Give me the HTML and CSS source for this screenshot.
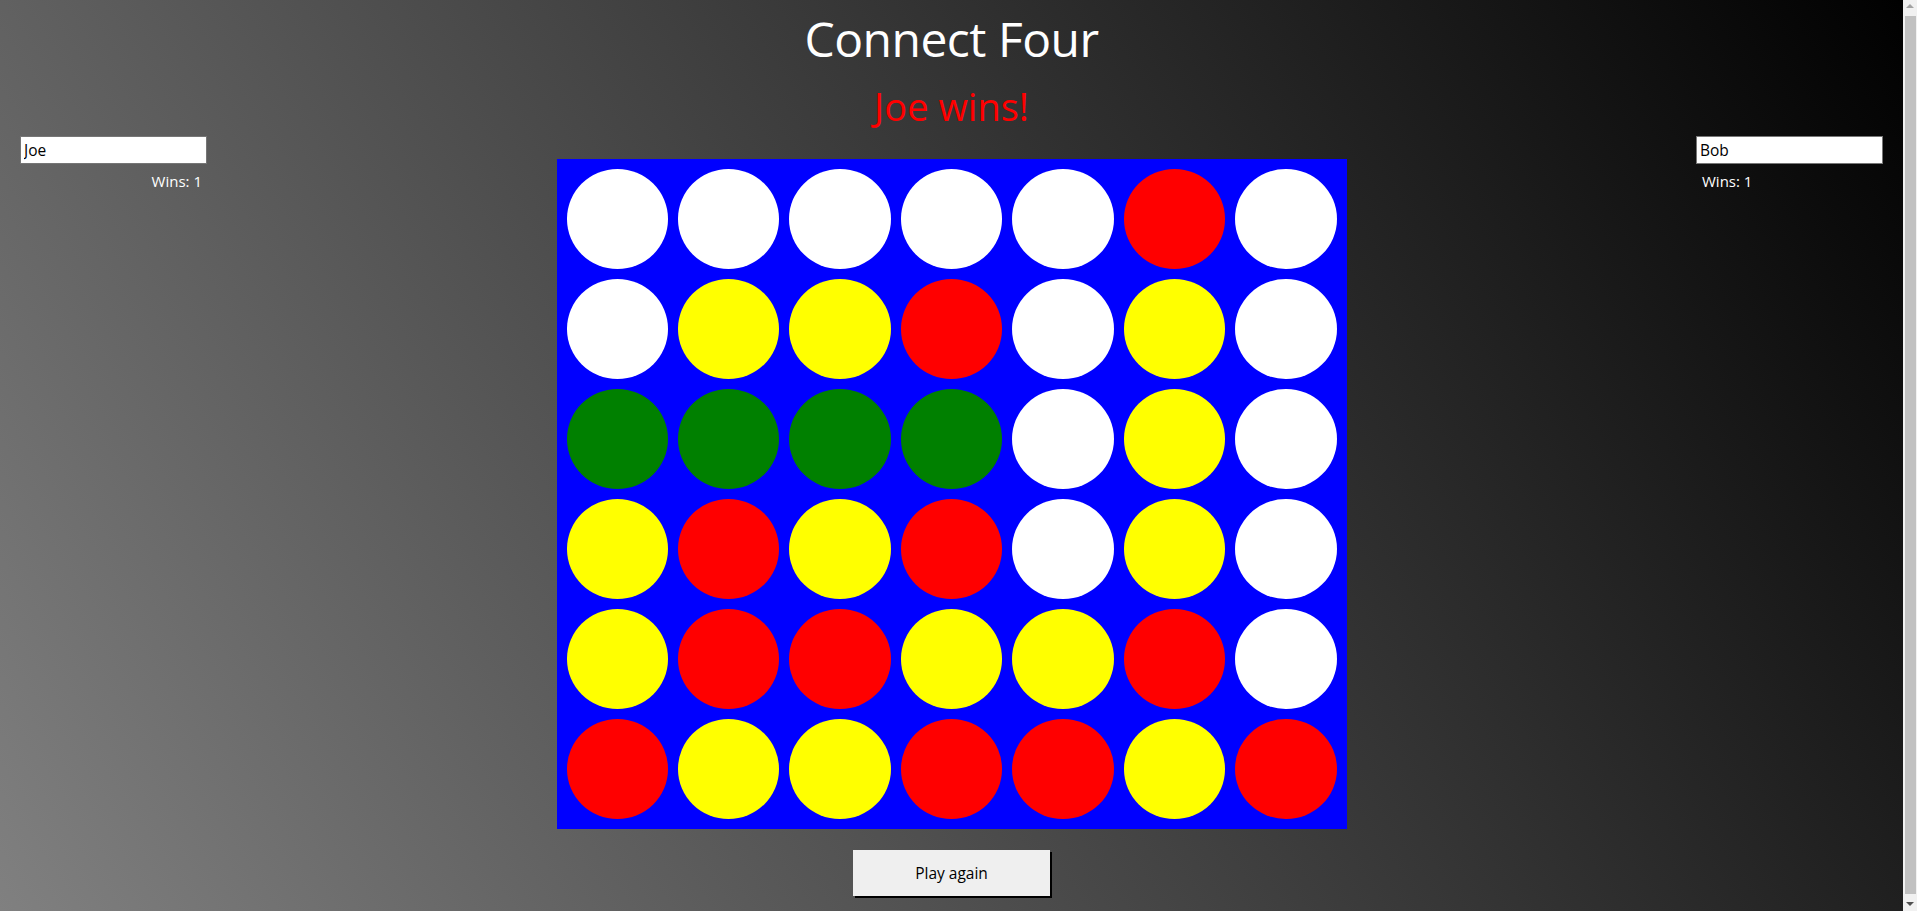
FILE: index.html
```html
<!DOCTYPE html>
<html lang="en">
<head>
<meta charset="utf-8">
<title>Connect Four</title>
<link rel="stylesheet" href="styles.css">
</head>
<body>
<div class="layout">
  <aside class="side side-left">
    <input class="name-input" type="text" value="Joe">
    <div class="wins wins-left">Wins: 1</div>
  </aside>
  <main class="center">
    <h1 class="title">Connect Four</h1>
    <div class="status">Joe wins!</div>
    <div class="board">
      <div class="cell"><span class="disc empty"></span></div>
      <div class="cell"><span class="disc empty"></span></div>
      <div class="cell"><span class="disc empty"></span></div>
      <div class="cell"><span class="disc empty"></span></div>
      <div class="cell"><span class="disc empty"></span></div>
      <div class="cell"><span class="disc red"></span></div>
      <div class="cell"><span class="disc empty"></span></div>

      <div class="cell"><span class="disc empty"></span></div>
      <div class="cell"><span class="disc yellow"></span></div>
      <div class="cell"><span class="disc yellow"></span></div>
      <div class="cell"><span class="disc red"></span></div>
      <div class="cell"><span class="disc empty"></span></div>
      <div class="cell"><span class="disc yellow"></span></div>
      <div class="cell"><span class="disc empty"></span></div>

      <div class="cell"><span class="disc green"></span></div>
      <div class="cell"><span class="disc green"></span></div>
      <div class="cell"><span class="disc green"></span></div>
      <div class="cell"><span class="disc green"></span></div>
      <div class="cell"><span class="disc empty"></span></div>
      <div class="cell"><span class="disc yellow"></span></div>
      <div class="cell"><span class="disc empty"></span></div>

      <div class="cell"><span class="disc yellow"></span></div>
      <div class="cell"><span class="disc red"></span></div>
      <div class="cell"><span class="disc yellow"></span></div>
      <div class="cell"><span class="disc red"></span></div>
      <div class="cell"><span class="disc empty"></span></div>
      <div class="cell"><span class="disc yellow"></span></div>
      <div class="cell"><span class="disc empty"></span></div>

      <div class="cell"><span class="disc yellow"></span></div>
      <div class="cell"><span class="disc red"></span></div>
      <div class="cell"><span class="disc red"></span></div>
      <div class="cell"><span class="disc yellow"></span></div>
      <div class="cell"><span class="disc yellow"></span></div>
      <div class="cell"><span class="disc red"></span></div>
      <div class="cell"><span class="disc empty"></span></div>

      <div class="cell"><span class="disc red"></span></div>
      <div class="cell"><span class="disc yellow"></span></div>
      <div class="cell"><span class="disc yellow"></span></div>
      <div class="cell"><span class="disc red"></span></div>
      <div class="cell"><span class="disc red"></span></div>
      <div class="cell"><span class="disc yellow"></span></div>
      <div class="cell"><span class="disc red"></span></div>
    </div>
    <button class="play-again" type="button">Play again</button>
  </main>
  <aside class="side side-right">
    <input class="name-input" type="text" value="Bob">
    <div class="wins wins-right">Wins: 1</div>
  </aside>
</div>
<div class="scrollbar" aria-hidden="true">
  <div class="sb-arrow sb-up"></div>
  <div class="sb-track"><div class="sb-thumb"></div></div>
  <div class="sb-arrow sb-down"></div>
</div>
</body>
</html>
```

FILE: styles.css
```css
html {
  height: 100%;
  background: linear-gradient(56deg, #808080 0%, #000000 100%);
}

body {
  margin: 0;
  height: 100%;
  overflow: hidden;
  font-family: "Open Sans", "Noto Sans", sans-serif;
  font-size: 15px;
  color: #ffffff;
}

.layout {
  display: flex;
  align-items: flex-start;
  width: calc(100% - 14px);
}

.side {
  width: 187px;
  padding-top: 136px;
  flex: none;
}

.side-left {
  padding-left: 20px;
}

.side-right {
  padding-right: 20px;
}

.name-input {
  display: block;
  box-sizing: border-box;
  width: 187px;
  height: 28px;
  margin: 0;
  padding: 0 3px;
  border: 1px solid #767676;
  border-radius: 0;
  background: #ffffff;
  color: #000000;
  font-family: "Open Sans", "Noto Sans", sans-serif;
  font-size: 15.5px;
  outline: none;
}

.wins {
  margin-top: 7px;
  line-height: 20px;
  color: #ffffff;
}

.wins-left {
  text-align: right;
  padding-right: 5px;
}

.wins-right {
  padding-left: 6px;
}

.center {
  flex: 1;
  display: flex;
  flex-direction: column;
  align-items: center;
}

.title {
  margin: 15px 0 0;
  font-size: 48px;
  line-height: 48px;
  font-weight: 400;
  letter-spacing: -0.5px;
  color: #ffffff;
}

.status {
  margin-top: 24px;
  font-size: 38px;
  line-height: 38px;
  color: #ff0000;
}

.board {
  margin-top: 34px;
  box-sizing: border-box;
  width: 790px;
  height: 670px;
  padding: 5px;
  background: #0000ff;
  display: grid;
  grid-template-columns: repeat(7, 1fr);
  grid-template-rows: repeat(6, 110px);
}

.cell {
  padding: 5px;
  display: flex;
}

.disc {
  flex: 1;
  border-radius: 50%;
}

.empty { background: #ffffff; }
.red { background: #ff0000; }
.yellow { background: #ffff00; }
.green { background: #008000; }

.play-again {
  margin-top: 21px;
  width: 197px;
  height: 46px;
  border: none;
  border-radius: 0;
  background: #efefef;
  box-shadow: 2px 2px 0 #000000;
  font-family: "Open Sans", "Noto Sans", sans-serif;
  font-size: 15.5px;
  color: #000000;
  padding: 0;
}

.scrollbar {
  position: fixed;
  top: 0;
  right: 0;
  width: 14px;
  height: 100%;
  background: #f1f1f1;
  display: flex;
  flex-direction: column;
}

.sb-arrow {
  height: 14px;
  flex: none;
  position: relative;
}

.sb-arrow::after {
  content: "";
  position: absolute;
  left: 3px;
  width: 0;
  height: 0;
  border-left: 4px solid transparent;
  border-right: 4px solid transparent;
}

.sb-up::after {
  top: 4px;
  border-bottom: 4px solid #a3a3a3;
}

.sb-down::after {
  top: 5px;
  border-top: 4px solid #505050;
}

.sb-track {
  flex: 1;
  padding: 2px 1px 3px 2px;
  display: flex;
}

.sb-thumb {
  flex: 1;
  background: #c1c1c1;
}
```
